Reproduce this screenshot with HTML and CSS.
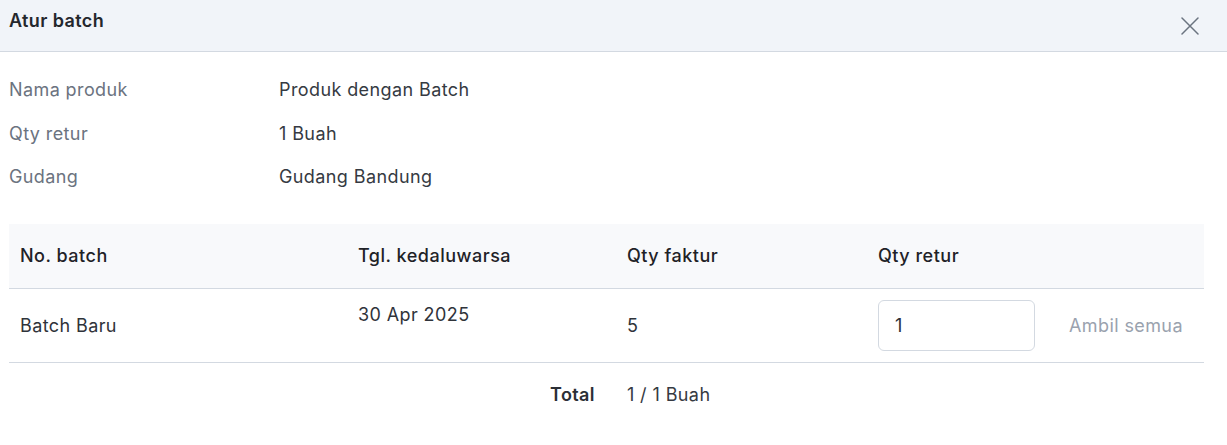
FILE: index.html
```html
<!DOCTYPE html>
<html lang="en">
<head>
  <meta charset="UTF-8">
  <meta name="viewport" content="width=device-width, initial-scale=1.0">
  <title>Atur batch</title>
  <link rel="stylesheet" href="styles.css">
</head>
<body>
  <div class="modal">
    <header class="modal-header">
      <h1>Atur batch</h1>
      <button class="close-btn" aria-label="Tutup">
        <svg width="18" height="18" viewBox="0 0 18 18" fill="none" stroke="currentColor" stroke-width="1.5" stroke-linecap="round">
          <path d="M1 1L17 17M17 1L1 17"/>
        </svg>
      </button>
    </header>
    <main class="modal-body">
      <dl class="info">
        <div class="info-row">
          <dt>Nama produk</dt>
          <dd>Produk dengan Batch</dd>
        </div>
        <div class="info-row">
          <dt>Qty retur</dt>
          <dd>1 Buah</dd>
        </div>
        <div class="info-row">
          <dt>Gudang</dt>
          <dd>Gudang Bandung</dd>
        </div>
      </dl>

      <table class="batch-table">
        <thead>
          <tr>
            <th class="col-batch">No. batch</th>
            <th class="col-exp">Tgl. kedaluwarsa</th>
            <th class="col-faktur">Qty faktur</th>
            <th class="col-retur">Qty retur</th>
          </tr>
        </thead>
        <tbody>
          <tr>
            <td>Batch Baru</td>
            <td class="cell-top">30 Apr 2025</td>
            <td>5</td>
            <td>
              <div class="retur-cell">
                <input type="text" class="qty-input" value="1">
                <button class="take-all">Ambil semua</button>
              </div>
            </td>
          </tr>
        </tbody>
      </table>

      <div class="total">
        <span class="total-label">Total</span>
        <span class="total-value">1 / 1 Buah</span>
      </div>
    </main>
  </div>
</body>
</html>
```

FILE: styles.css
```css
* {
  box-sizing: border-box;
}
body {
  margin: 0;
  font-family: Inter, "Noto Sans", sans-serif;
  font-size: 18px;
  letter-spacing: 0.4px;
  color: #2b2f36;
  background: #fff;
}
.modal-header {
  display: flex;
  align-items: center;
  justify-content: space-between;
  height: 52px;
  padding: 0 28px 0 9px;
  background-color: #f1f4f9;
  border-bottom: 1px solid #d3d9e1;
}
.modal-header h1 {
  margin: 0 0 11px;
  font-size: 18px;
  font-weight: 600;
  color: #24272d;
}
.close-btn {
  display: flex;
  padding: 0;
  margin-top: 1px;
  background: none;
  border: none;
  color: #6b7380;
  cursor: pointer;
}
.modal-body {
  padding: 16px 23px 0 9px;
}
.info {
  margin: 0 0 25px;
}
.info-row {
  display: flex;
  align-items: center;
  height: 43.5px;
}
.info-row dt {
  width: 270px;
  color: #6b7380;
}
.info-row dd {
  margin: 0;
  color: #353a42;
}
.batch-table {
  width: 100%;
  border-collapse: collapse;
}
.batch-table th {
  height: 65px;
  padding: 0 11px;
  text-align: left;
  font-weight: 500;
  letter-spacing: 0.5px;
  color: #1f2227;
  background-color: #f8f9fb;
  border-bottom: 1px solid #d3d9e1;
}
.batch-table td {
  height: 74px;
  padding: 0 11px;
  color: #2f333a;
  border-bottom: 1px solid #d3d9e1;
}
.batch-table td.cell-top {
  vertical-align: top;
  padding-top: 15px;
}
.col-batch { width: 338px; }
.col-exp { width: 269px; }
.col-faktur { width: 251px; }
.retur-cell {
  display: flex;
  align-items: center;
  gap: 34px;
}
.qty-input {
  width: 157px;
  height: 51px;
  padding: 0 16px;
  font-family: inherit;
  font-size: 18px;
  color: #2b2f36;
  border: 1px solid #d3d9e1;
  border-radius: 6px;
  outline: none;
}
.take-all {
  padding: 0;
  font-family: inherit;
  font-size: 18px;
  letter-spacing: 0.4px;
  color: #9aa2ae;
  background: none;
  border: none;
  cursor: pointer;
}
.total {
  display: flex;
  gap: 32px;
  padding: 21px 0 0 541px;
}
.total-label {
  font-weight: 600;
  color: #2b2f36;
}
.total-value {
  color: #353a42;
}
```
